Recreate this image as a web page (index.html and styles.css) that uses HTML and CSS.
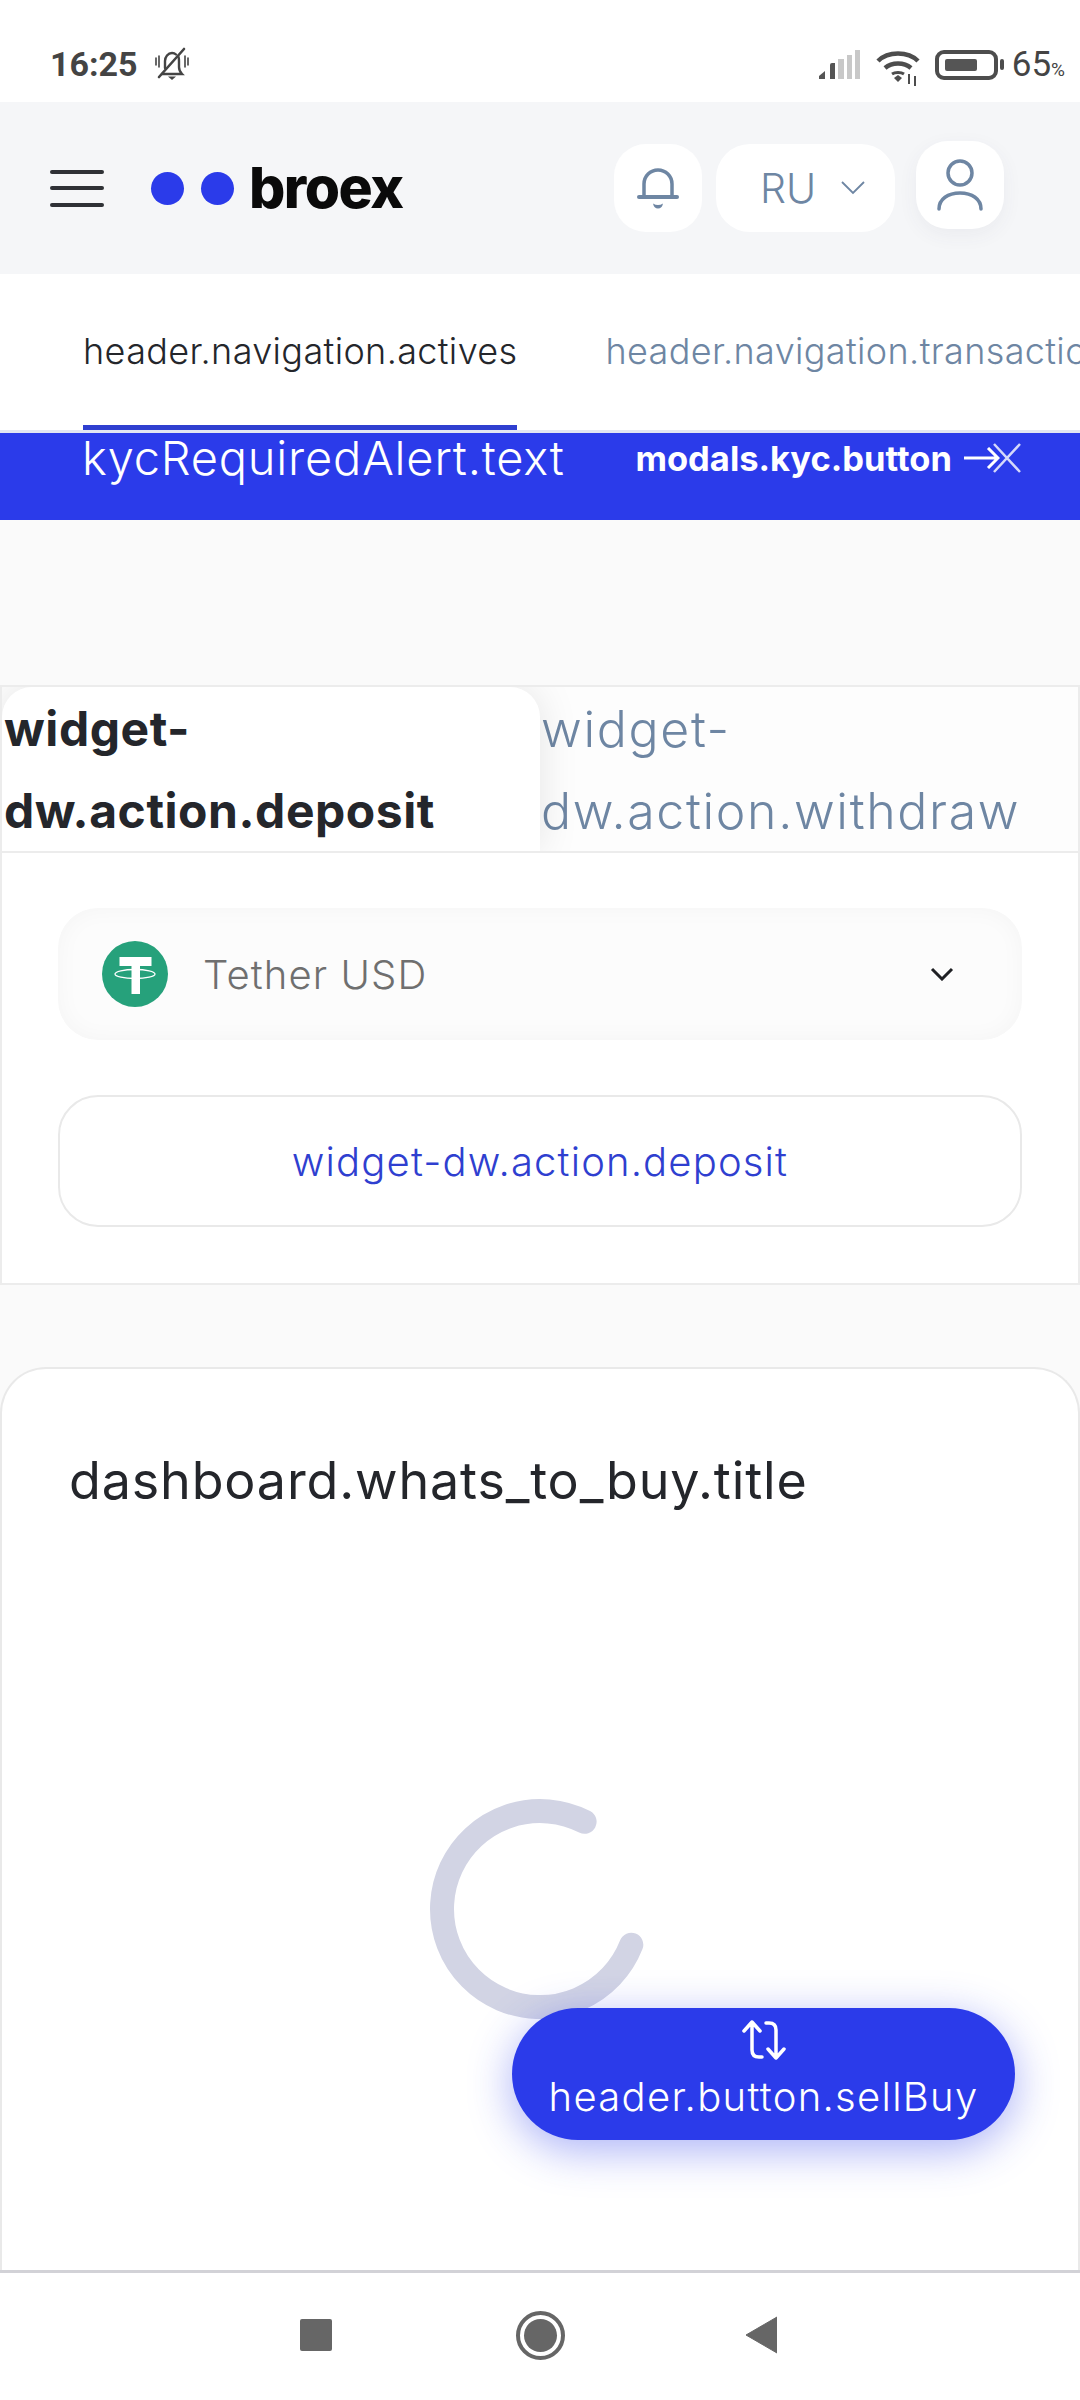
FILE: index.html
```html
<!DOCTYPE html>
<html lang="en">
<head>
  <meta charset="UTF-8">
  <meta name="viewport" content="width=device-width, initial-scale=1.0">
  <title>broex</title>
  <link rel="stylesheet" href="styles.css">
</head>
<body>
  <div class="statusbar">
    <div class="status-left">
      <span class="time">16:25</span>
      <svg class="mute" width="34" height="34" viewBox="0 0 34 34" fill="none" stroke="#444" stroke-width="2.4" stroke-linecap="round">
        <path d="M7 27h20c-2-2-3-4-3-7v-6c0-2 0-4-1-5M10 21v-7c0-4 3-8 7-8 2 0 3 .5 4 1.500"/>
        <path d="M4 30 29 2" stroke-width="2.6"/>
        <path d="M1 11v7M4 9v11M30 9v11M33 11v7" stroke-width="1.6"/>
        <path d="M13 29.500h8l-4 3.500z" fill="#444" stroke="none"/>
      </svg>
    </div>
    <div class="status-right">
      <svg width="41" height="29" viewBox="0 0 41 29">
        <path d="M0 29v-3l6-5v8z" fill="#555"/>
        <path d="M11 29V15q0-2 2-2h3v16z" fill="#555"/>
        <rect x="19" y="9" width="6" height="20" fill="#c8c8c8"/>
        <rect x="28" y="5" width="5" height="24" fill="#c8c8c8"/>
        <rect x="36" y="0" width="5" height="29" fill="#c8c8c8"/>
      </svg>
      <svg width="44" height="36" viewBox="0 0 44 36" fill="none" stroke="#4d4d4d" stroke-width="4.500">
        <path d="M2 11C12 1 32 1 42 11"/>
        <path d="M9 18c7-6 19-6 26 0"/>
        <path d="M16 24c3-2 9-2 12 0" stroke-width="3"/>
        <path d="M18 28l4-3 4 3-4 4z" fill="#4d4d4d" stroke="none"/>
        <path d="M33 24v10M39 26v10" stroke-width="2"/>
      </svg>
      <div class="battery"><div class="battery-level"></div></div>
      <div class="battery-nub"></div>
      <span class="percent">65<small>%</small></span>
    </div>
  </div>

  <header class="header">
    <div class="burger"><i></i><i></i><i></i></div>
    <div class="logo">
      <span class="logo-dot"></span>
      <span class="logo-dot"></span>
      <span class="logo-text">broex</span>
    </div>
    <div class="header-actions">
      <div class="hbtn">
        <svg width="42" height="44" viewBox="0 0 42 44" fill="none" stroke="#6e86a3" stroke-width="3.500" stroke-linecap="round">
          <path d="M7 31V18a14 14 0 0 1 28 0v13"/>
          <path d="M2 31h38" stroke-width="4"/>
          <path d="M16 37.500q5 3 10 0-1 5-5 5t-5-5z" fill="#6e86a3" stroke="none"/>
        </svg>
      </div>
      <div class="hbtn hbtn-lang">
        <span>RU</span>
        <svg width="24" height="14" viewBox="0 0 24 14" fill="none" stroke="#6e86a3" stroke-width="1.800">
          <path d="M1 1l11 11L23 1"/>
        </svg>
      </div>
      <div class="hbtn hbtn-user">
        <svg width="46" height="52" viewBox="0 0 46 52" fill="none" stroke="#6e86a3" stroke-width="3.500" stroke-linecap="round">
          <circle cx="23" cy="14" r="12"/>
          <path d="M2 50c0-10 9-16 21-16s21 6 21 16"/>
        </svg>
      </div>
    </div>
  </header>

  <nav class="tabs-nav">
    <a class="nav-item active">header.navigation.actives</a>
    <a class="nav-item">header.navigation.transactions</a>
  </nav>

  <div class="kyc-alert">
    <span class="kyc-text">kycRequiredAlert.text</span>
    <span class="kyc-button">modals.kyc.button</span>
    <svg class="kyc-arrow" width="36" height="22" viewBox="0 0 36 22" fill="none" stroke="#fff" stroke-width="3">
      <path d="M0 11h34M24 1l10 10-10 10"/>
    </svg>
    <svg class="kyc-close" width="32" height="30" viewBox="0 0 32 30" fill="none" stroke="#d5d8fa" stroke-width="2.500">
      <path d="M3 1l26 28M29 1L3 29"/>
    </svg>
  </div>

  <main class="content">
    <section class="widget">
      <div class="widget-tabs">
        <div class="widget-tab active">widget-<br>dw.action.deposit</div>
        <div class="widget-tab">widget-<br>dw.action.withdraw</div>
      </div>
      <div class="widget-body">
        <div class="coin-select">
          <svg width="66" height="66" viewBox="0 0 66 66">
            <circle cx="33" cy="33" r="33" fill="#26a17b"/>
            <path d="M17.500 16h32v9H38v28h-8.500V25h-12z" fill="#fff"/>
            <ellipse cx="33" cy="33" rx="20" ry="4.500" fill="none" stroke="#fff" stroke-width="1.300"/>
          </svg>
          <span class="coin-name">Tether USD</span>
          <svg class="coin-chevron" width="24" height="14" viewBox="0 0 24 14" fill="none" stroke="#1f2024" stroke-width="3">
            <path d="M2 2l10 10L22 2"/>
          </svg>
        </div>
        <button type="button" class="deposit-btn">widget-dw.action.deposit</button>
      </div>
    </section>

    <section class="buy-card">
      <h2 class="buy-title">dashboard.whats_to_buy.title</h2>
      <div class="spinner-wrap">
        <svg width="220" height="220" viewBox="0 0 220 220" fill="none" stroke="#d2d4e4" stroke-width="24" stroke-linecap="round">
          <path d="M154.600 22.800A98 98 0 1 0 201.300 145.700"/>
        </svg>
      </div>
    </section>
  </main>

  <button type="button" class="fab">
    <svg width="44" height="40" viewBox="0 0 44 40" fill="none" stroke="#fff" stroke-width="3.500" stroke-linecap="round" stroke-linejoin="round">
      <path d="M2 11 10 2l8 9M10 2v28q0 7 7 7h3"/>
      <path d="M42 29l-8 9-8-9M34 38V10q0-7-7-7h-3"/>
    </svg>
    <span>header.button.sellBuy</span>
  </button>

  <footer class="navbar">
    <div class="nav-square"></div>
    <div class="nav-home"><div class="nav-home-dot"></div></div>
    <svg class="nav-back" width="32" height="38" viewBox="0 0 32 38">
      <path d="M32 1v36L1 19z" fill="#666" stroke="#666" stroke-width="1" stroke-linejoin="round"/>
    </svg>
  </footer>
</body>
</html>
```

FILE: styles.css
```css
* {
  box-sizing: border-box;
}
body {
  position: relative;
  display: flex;
  flex-direction: column;
  width: 1080px;
  height: 2400px;
  margin: 0;
  overflow: hidden;
  background: #fafafa;
  font-family: Inter, "Noto Sans", sans-serif;
  color: #24262b;
}

/* status bar */
.statusbar {
  display: flex;
  justify-content: space-between;
  align-items: flex-start;
  height: 102px;
  padding: 46px 15px 0 50px;
  background: #fff;
  color: #444;
  font-family: Roboto, sans-serif;
}
.status-left {
  display: flex;
  align-items: center;
  gap: 17px;
}
.time {
  font-size: 34px;
  font-weight: 700;
  line-height: 36px;
}
.status-right {
  display: flex;
  align-items: flex-start;
  padding-top: 4px;
}
.status-right svg:nth-child(2) {
  margin-left: 16px;
}
.battery {
  width: 63px;
  height: 30px;
  margin-left: 15px;
  padding: 5px 6px;
  border: 4px solid #4d4d4d;
  border-radius: 9px;
}
.battery-level {
  width: 32px;
  height: 100%;
  background: #555;
  border-radius: 2px;
}
.battery-nub {
  width: 4px;
  height: 11px;
  margin: 9px 0 0 2px;
  background: #4d4d4d;
  border-radius: 2px;
}
.percent {
  margin-left: 8px;
  font-size: 35px;
  line-height: 30px;
}
.percent small {
  font-size: 19px;
}

/* header */
.header {
  display: flex;
  align-items: center;
  height: 172px;
  padding: 0 76px 0 50px;
  background: #f5f6f8;
}
.burger {
  display: flex;
  flex-direction: column;
  gap: 12.500px;
  width: 54px;
}
.burger i {
  display: block;
  height: 4px;
  background: #2f3136;
  border-radius: 2px;
}
.logo {
  display: flex;
  align-items: center;
  margin-left: 47px;
}
.logo-dot {
  width: 33px;
  height: 33px;
  margin-right: 17px;
  background: #2b3bea;
  border-radius: 50%;
}
.logo-text {
  margin-left: -2px;
  font-size: 57px;
  font-weight: 800;
  line-height: 60px;
  letter-spacing: -1.500px;
  color: #0a0a0a;
}
.header-actions {
  display: flex;
  align-items: flex-start;
  gap: 14px;
  margin-left: auto;
}
.hbtn {
  display: flex;
  justify-content: center;
  align-items: center;
  width: 88px;
  height: 88px;
  background: #fff;
  border-radius: 32px;
}
.hbtn-lang {
  width: 179px;
  gap: 25px;
  padding-left: 14px;
  border-radius: 34px;
  font-size: 41px;
  font-weight: 300;
  color: #6e86a3;
}
.hbtn-user {
  margin: -3px 0 0 7px;
  box-shadow: 0 6px 20px rgba(60, 70, 100, 0.06);
}

/* navigation */
.tabs-nav {
  display: flex;
  gap: 88px;
  height: 159px;
  padding-left: 83px;
  overflow: hidden;
  background: #fff;
  border-bottom: 3px solid #e3e6f2;
}
.nav-item {
  flex: none;
  height: 156px;
  padding-top: 55px;
  font-size: 36px;
  line-height: 44px;
  font-weight: 300;
  letter-spacing: 0.360px;
  color: #6e86a3;
}
.nav-item.active {
  color: #24262b;
  border-bottom: 5px solid #2f3fd0;
}

/* kyc alert */
.kyc-alert {
  display: flex;
  align-items: flex-start;
  height: 87px;
  padding: 0 0 0 82px;
  background: #2b3bea;
  color: #fff;
}
.kyc-text {
  font-size: 47px;
  font-weight: 300;
  line-height: 54px;
  letter-spacing: 0.800px;
  margin-top: -2px;
}
.kyc-button {
  margin-left: 71px;
  font-size: 34.500px;
  font-weight: 700;
  line-height: 54px;
  margin-top: -1px;
}
.kyc-arrow {
  margin: 14px 0 0 12px;
}
.kyc-close {
  margin: 10px 0 0 -9px;
}

/* content */
.content {
  display: flex;
  flex-direction: column;
  flex: 1;
  padding-top: 165px;
}
.widget {
  height: 600px;
  background: #fff;
  border: 2px solid #ececec;
}
.widget-tabs {
  display: flex;
  height: 166px;
  overflow: hidden;
  background: #fdfdfd;
  border-bottom: 2px solid #ececec;
}
.widget-tab {
  padding: 1px 0 0 1px;
  font-size: 50px;
  font-weight: 300;
  line-height: 82px;
  letter-spacing: 1.650px;
  white-space: nowrap;
  color: #6e86a3;
}
.widget-tab.active {
  position: relative;
  flex: none;
  width: 538px;
  padding-left: 2px;
  font-size: 48px;
  font-weight: 700;
  letter-spacing: 0.550px;
  color: #24262b;
  background: #fff;
  border-radius: 30px 30px 0 0;
  box-shadow: 0 0 40px rgba(0, 0, 0, 0.1);
}
.widget-body {
  display: flex;
  flex-direction: column;
  gap: 55px;
  padding: 55px 56px 0;
}
.coin-select {
  display: flex;
  align-items: center;
  height: 132px;
  padding: 0 68px 0 44px;
  background: #fcfcfc;
  border-radius: 40px;
  box-shadow: inset 0 0 24px rgba(0, 0, 0, 0.035);
}
.coin-name {
  margin-left: 35px;
  font-size: 40px;
  font-weight: 300;
  letter-spacing: 1.100px;
  color: #6f6f6f;
}
.coin-chevron {
  margin-left: auto;
}
.deposit-btn {
  height: 132px;
  background: #fff;
  border: 2px solid #e9e9e9;
  border-radius: 40px;
  font-family: inherit;
  font-size: 40px;
  font-weight: 300;
  letter-spacing: 1.150px;
  color: #2f3fd0;
}
.buy-card {
  flex: 1;
  margin-top: 82px;
  background: #fff;
  border: 2px solid #e9e9e9;
  border-bottom: 0;
  border-radius: 46px 46px 0 0;
}
.buy-title {
  margin: 82px 0 0 67px;
  font-size: 52px;
  font-weight: 400;
  line-height: 60px;
  letter-spacing: 0.850px;
}
.spinner-wrap {
  display: flex;
  justify-content: center;
  margin-top: 288px;
}

/* floating button */
.fab {
  position: absolute;
  left: 512px;
  top: 2008px;
  display: flex;
  flex-direction: column;
  align-items: center;
  gap: 9px;
  width: 503px;
  height: 132px;
  padding: 12px 0 0;
  background: #2b3bea;
  border: none;
  border-radius: 66px;
  box-shadow: 0 10px 44px rgba(43, 59, 234, 0.4);
  font-family: inherit;
  font-size: 40px;
  font-weight: 300;
  line-height: 56px;
  letter-spacing: 1.300px;
  color: #fff;
}

/* android nav bar */
.navbar {
  display: flex;
  align-items: center;
  height: 130px;
  padding: 0 0 3px 300px;
  background: #fff;
  border-top: 3px solid #d2d2d7;
}
.nav-square {
  width: 32px;
  height: 32px;
  background: #666;
  border-radius: 2px;
}
.nav-home {
  display: flex;
  justify-content: center;
  align-items: center;
  width: 49px;
  height: 49px;
  margin-left: 183.500px;
  border: 4px solid #666;
  border-radius: 50%;
}
.nav-home-dot {
  width: 33px;
  height: 33px;
  background: #666;
  border-radius: 50%;
}
.nav-back {
  margin-left: 180.500px;
}
```
